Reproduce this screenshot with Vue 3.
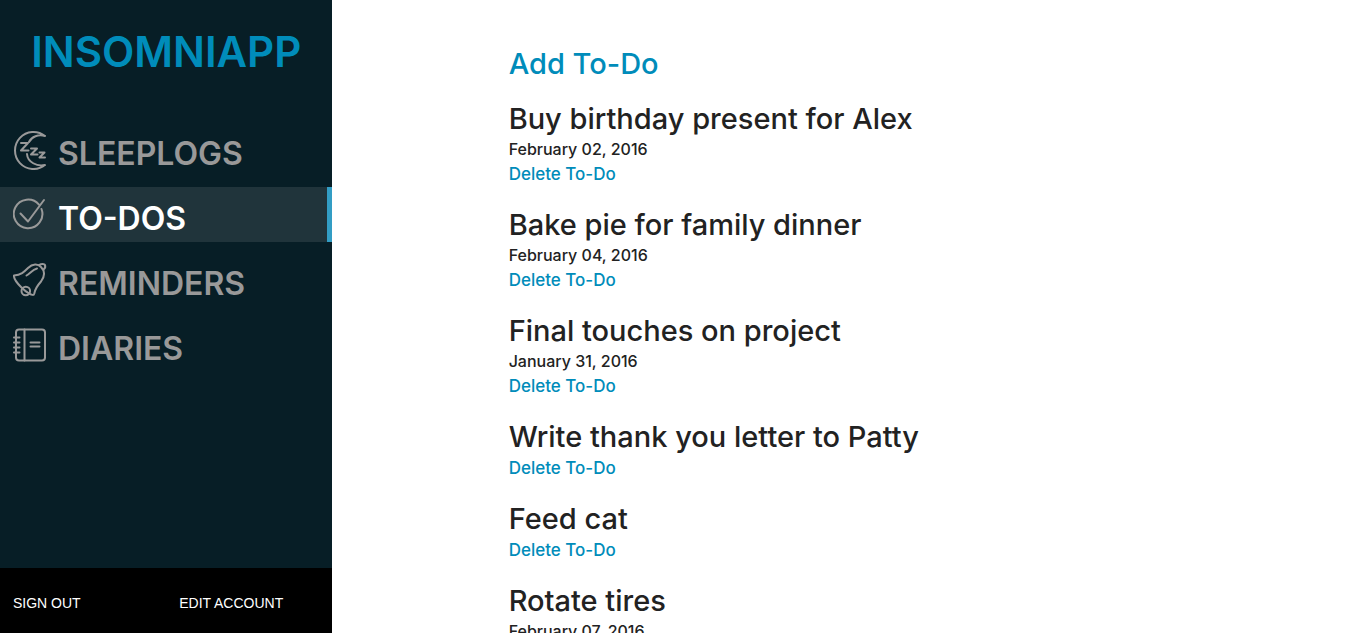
<script setup>
const todos = [
  { title: 'Buy birthday present for Alex', date: 'February 02, 2016' },
  { title: 'Bake pie for family dinner', date: 'February 04, 2016' },
  { title: 'Final touches on project', date: 'January 31, 2016' },
  { title: 'Write thank you letter to Patty' },
  { title: 'Feed cat' },
  { title: 'Rotate tires', date: 'February 07, 2016' },
]
</script>

<template>
  <div class="app">
    <aside class="sidebar">
      <h1 class="brand"><a href="#">INSOMNIAPP</a></h1>
      <nav class="nav">
        <a href="#sleeplogs" class="nav-item">
          <svg class="icon" viewBox="0 0 36 40" aria-hidden="true">
            <path d="M32 6A18.500 18.500 0 1 0 32 35C24 37 14.500 32 14 24M16 12C18.500 6.500 25.500 4 32 6" />
            <path d="M8 13h7l-7 7.500h7.500M18 18.500h6l-6 6h6.500M26.500 22.500h5l-5 5h5.500" />
          </svg>
          <span>SLEEPLOGS</span>
        </a>
        <a href="#todos" class="nav-item active" aria-current="page">
          <svg class="icon" viewBox="0 0 36 40" aria-hidden="true">
            <path d="M26 9.700A14.300 14.300 0 1 0 28.500 14" />
            <path d="M7.500 18.500l7.500 8L31 5" />
          </svg>
          <span>TO-DOS</span>
        </a>
        <a href="#reminders" class="nav-item">
          <svg class="icon" viewBox="0 0 36 40" aria-hidden="true">
            <path d="M1 15.500C8 15 11 12 15 8C19.500 3.500 25 3.500 28 7C32.500 11.500 32 16 28 21.500C24 26 22 29 21.300 33.500C20.500 37.500 13 32 8 27C4 23 .500 19 1 15.500z" />
            <circle cx="12.800" cy="31" r="4.300" />
            <path d="M26 5.200C28.500 3.500 30.500 3.800 31.700 4.500C32.500 6 32.500 8 30.500 9.500" />
            <path d="M13.500 15.500C17 13.500 19.500 9.500 24 8.500" />
          </svg>
          <span>REMINDERS</span>
        </a>
        <a href="#diaries" class="nav-item">
          <svg class="icon" viewBox="0 0 36 40" aria-hidden="true">
            <rect x="3" y="4.500" width="29" height="31" rx="3" />
            <path d="M11.500 4.500v31M1 12.500h5.500M1 17.500h5.500M1 22.500h5.500M1 27.500h5.500M17.500 17.500h9M17.500 21.500h9" />
          </svg>
          <span>DIARIES</span>
        </a>
      </nav>
      <footer class="account">
        <a href="#sign-out">SIGN OUT</a>
        <a href="#account">EDIT ACCOUNT</a>
      </footer>
    </aside>
    <main class="content">
      <div class="list">
        <h2 class="add"><a href="#new">Add To-Do</a></h2>
        <article v-for="todo in todos" :key="todo.title" class="todo">
          <h2>{{ todo.title }}</h2>
          <p v-if="todo.date">{{ todo.date }}</p>
          <a href="#delete">Delete To-Do</a>
        </article>
      </div>
    </main>
  </div>
</template>

<style>
body {
  margin: 0;
  background: #fff;
}
</style>

<style scoped>
.app {
  display: flex;
  height: 100vh;
  overflow: hidden;
  color: #222;
  font-family: Inter, "Liberation Sans", sans-serif;
  font-weight: 500;
}
a {
  color: #008cba;
  text-decoration: none;
}
h1,
h2,
p {
  margin: 0;
}
.sidebar {
  flex: none;
  width: 24.5%;
  display: flex;
  flex-direction: column;
  background: #071e26;
}
.brand {
  margin-bottom: 18px;
  padding-top: 24px;
  font-size: 42px;
  font-weight: 600;
  line-height: 56px;
  text-align: center;
}
.nav {
  flex: 1;
}
.nav-item {
  display: flex;
  align-items: center;
  gap: 9px;
  height: 55px;
  margin-top: 10px;
  padding-left: 13px;
  font-size: 32px;
  font-weight: 600;
  color: #999;
}
.nav-item:first-child {
  margin-top: 24px;
}
.nav-item span {
  padding-top: 8px;
}
.active {
  border-right: 5px solid #329dc4;
  background: #20343b;
  color: #fff;
}
.icon {
  width: 36px;
  height: 40px;
  fill: none;
  stroke: #999;
  stroke-width: 2;
  stroke-linecap: round;
  stroke-linejoin: round;
}
.account {
  display: grid;
  grid-template-columns: 1fr 1fr;
  align-items: center;
  height: 65px;
  padding-top: 4px;
  box-sizing: border-box;
  background: #000;
  font-family: "Liberation Sans", Arial, sans-serif;
  font-size: 14px;
  font-weight: 400;
}
.account a {
  padding-left: 13px;
  color: #fff;
}
.content {
  flex: 1;
  overflow: hidden;
}
.list {
  box-sizing: border-box;
  width: 66%;
  margin: 0 auto;
  padding: 46px 0 0 2px;
}
h2 {
  font-size: 29px;
  font-weight: 500;
  line-height: 36px;
}
.add {
  margin-bottom: 19px;
}
.todo {
  margin-bottom: 21px;
  font-size: 16px;
  line-height: 24px;
}
.todo a {
  display: block;
  padding-top: 1px;
  font-size: 17px;
}
</style>
